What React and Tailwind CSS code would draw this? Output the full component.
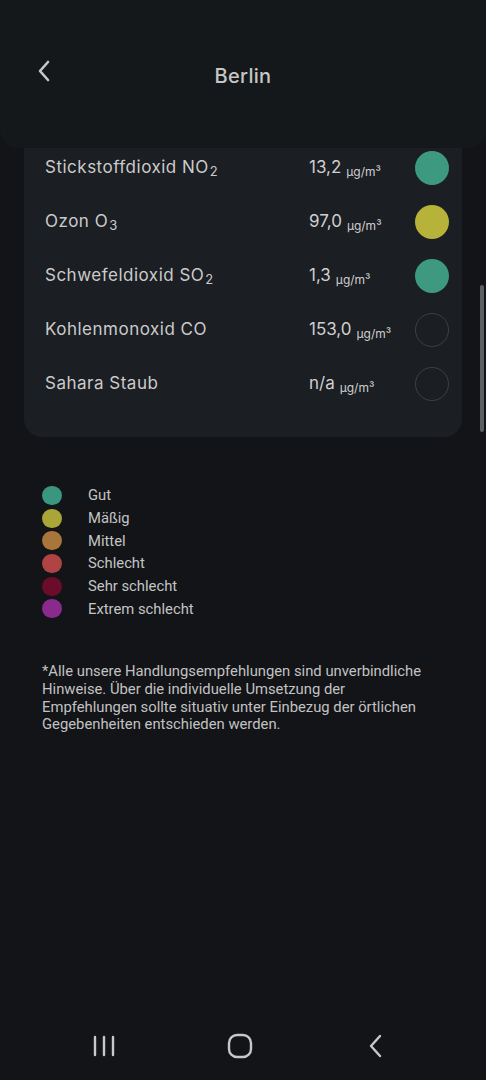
import React from 'react';

const rows = [
  { name: 'Stickstoffdioxid NO', sub: '2', value: '13,2', color: 'bg-[#3d9a80]' },
  { name: 'Ozon O', sub: '3', value: '97,0', color: 'bg-[#b7b23a]' },
  { name: 'Schwefeldioxid SO', sub: '2', value: '1,3', color: 'bg-[#3d9a80]' },
  { name: 'Kohlenmonoxid CO', sub: '', value: '153,0', color: null },
  { name: 'Sahara Staub', sub: '', value: 'n/a', color: null },
];

const legend = [
  { label: 'Gut', color: 'bg-[#3b9680]' },
  { label: 'Mäßig', color: 'bg-[#aaa537]' },
  { label: 'Mittel', color: 'bg-[#a8753a]' },
  { label: 'Schlecht', color: 'bg-[#b04444]' },
  { label: 'Sehr schlecht', color: 'bg-[#6a0c2a]' },
  { label: 'Extrem schlecht', color: 'bg-[#8a2a8c]' },
];

const PollutantRow = ({ row }) => (
  <div className="flex items-center h-[54px] pl-[21px] pr-[13px]">
    <div className="flex-1 text-[17px] text-[#cbcbcb] tracking-[0.5px]">
      {row.name}
      {row.sub && <span className="text-[13px] relative top-[3px] ml-[1px]">{row.sub}</span>}
    </div>
    <div className="w-[106px] text-[17px] text-[#cfcfcf]">
      {row.value}
      <span className="text-[12px] ml-[5px] relative top-[3px]">µg/m³</span>
    </div>
    {row.color ? (
      <div className={`w-[34px] h-[34px] rounded-full ${row.color}`} />
    ) : (
      <div className="w-[34px] h-[34px] rounded-full border border-[#3c4044]" />
    )}
  </div>
);

export default function App() {
  return (
    <div className="w-[486px] h-[1080px] bg-[#121417] flex flex-col overflow-hidden relative" style={{ fontFamily: 'Inter, "Noto Sans", sans-serif' }}>
      {/* header */}
      <div className="relative z-10 h-[148px] bg-[#15181b] rounded-b-[18px] shrink-0 flex items-center pt-[4px]">
        <div className="w-[88px] flex justify-center -mt-[10px]">
          <svg width="16" height="24" viewBox="0 0 16 24" fill="none" stroke="#c8c8c8" strokeWidth="2.6" strokeLinecap="round" strokeLinejoin="round">
            <path d="M12 3 L4 12 L12 21" />
          </svg>
        </div>
        <div className="flex-1 text-center text-[20px] font-medium text-[#c6c6c6] pr-[88px] tracking-[0.3px]">Berlin</div>
      </div>

      {/* scroll area */}
      <div className="flex-1 flex flex-col relative">
        <div className="mx-[24px] -mt-[7px] bg-[#1b1e22] rounded-b-[18px] pb-[26px]">
          {rows.map((r, i) => (
            <PollutantRow key={i} row={r} />
          ))}
        </div>

        <div className="mt-[47px] pl-[42px] flex flex-col" style={{ fontFamily: 'Roboto, "Liberation Sans", sans-serif' }}>
          {legend.map((l, i) => (
            <div key={i} className="flex items-center h-[22.7px]">
              <div className={`w-[20px] h-[19px] rounded-full ${l.color}`} />
              <span className="ml-[26px] text-[14.8px] text-[#c4c4c4]">{l.label}</span>
            </div>
          ))}
        </div>

        <p className="mt-[43px] pl-[42px] pr-[56px] text-[14.8px] leading-[17.7px] text-[#c2c2c2]" style={{ fontFamily: 'Roboto, "Liberation Sans", sans-serif' }}>
          *Alle unsere Handlungsempfehlungen sind unverbindliche Hinweise. Über die individuelle Umsetzung der Empfehlungen sollte situativ unter Einbezug der örtlichen Gegebenheiten entschieden werden.
        </p>

        {/* scrollbar */}
        <div className="absolute right-[2px] top-[137px] w-[4px] h-[147px] rounded-full bg-[#5b5e62]" />
      </div>

      {/* nav bar */}
      <div className="h-[68px] shrink-0 flex items-center pl-[80px] gap-[88px] pb-[1px]">
        <div className="w-[48px] flex justify-center">
          <svg width="24" height="22" viewBox="0 0 24 22" stroke="#c8c8c8" strokeWidth="2.4" strokeLinecap="round">
            <path d="M3 2 V20 M12 2 V20 M21 2 V20" />
          </svg>
        </div>
        <div className="w-[48px] flex justify-center">
          <svg width="26" height="26" viewBox="0 0 26 26" fill="none" stroke="#c8c8c8" strokeWidth="2.4">
            <rect x="2" y="2" width="22" height="22" rx="8" />
          </svg>
        </div>
        <div className="w-[48px] flex justify-center">
          <svg width="16" height="24" viewBox="0 0 16 24" fill="none" stroke="#c8c8c8" strokeWidth="2.4" strokeLinecap="round" strokeLinejoin="round">
            <path d="M12 2 L3 12 L12 22" />
          </svg>
        </div>
      </div>
    </div>
  );
}
